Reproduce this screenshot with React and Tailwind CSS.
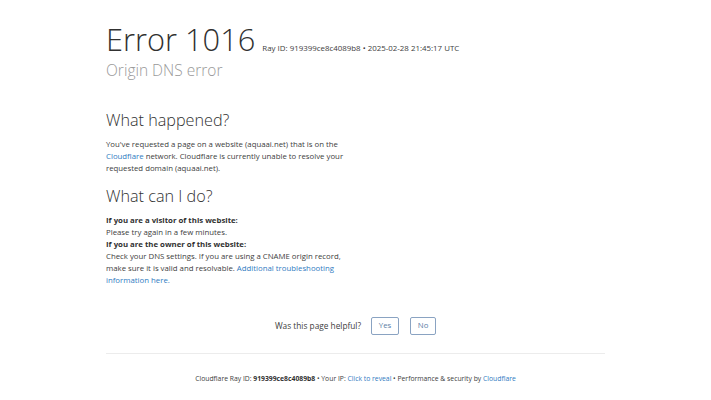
export default function App() {
  const font = { fontFamily: '"Open Sans", "Noto Sans", sans-serif' };
  return (
    <div className="min-h-[400px] bg-white text-[#404040]" style={font}>
      <div className="mx-auto w-[499px] pt-[20px]">
        <h1 className="flex items-baseline text-[#313131]">
          <span className="text-[30.8px] font-light leading-[39px]">Error 1016</span>
          <span className="ml-[7px] text-[7.9px] leading-[12px] text-[#404040]">
            Ray ID: 919399ce8c4089b8 • 2025-02-28 21:45:17 UTC
          </span>
        </h1>
        <h2 className="mt-[1px] text-[15.5px] font-light leading-[20px] text-[#999999]">Origin DNS error</h2>

        <div className="mt-[30px] w-[244px]">
          <h2 className="text-[16.2px] font-light leading-[20px] text-[#313131]">What happened?</h2>
          <p className="mt-[8px] text-[7.8px] leading-[12px]">
            You've requested a page on a website (aquaai.net) that is on the{" "}
            <span className="text-[#2f7bbf]">Cloudflare</span> network. Cloudflare is currently unable to resolve your
            requested domain (aquaai.net).
          </p>

          <h2 className="mt-[12px] text-[16.2px] font-light leading-[20px] text-[#313131]">What can I do?</h2>
          <div className="mt-[8px] text-[7.8px] leading-[12px]">
            <p className="font-bold text-[#313131]">If you are a visitor of this website:</p>
            <p>Please try again in a few minutes.</p>
            <p className="font-bold text-[#313131]">If you are the owner of this website:</p>
            <p>
              Check your DNS settings. If you are using a CNAME origin record, make sure it is valid and resolvable.{" "}
              <span className="text-[#2f7bbf]">Additional troubleshooting information here.</span>
            </p>
          </div>
        </div>

        <div className="mt-[31px] flex items-center justify-center text-[8.3px]">
          <span>Was this page helpful?</span>
          <button className="ml-[10px] flex h-[18px] w-[28px] items-center justify-center rounded-[2px] border border-[#8aa3c2] bg-white text-[7.8px] text-[#5a7ea6]">
            Yes
          </button>
          <button className="ml-[11px] flex h-[18px] w-[26px] items-center justify-center rounded-[2px] border border-[#8aa3c2] bg-white text-[7.8px] text-[#5a7ea6]">
            No
          </button>
        </div>

        <div className="mt-[18px] border-t border-[#ececec]"></div>

        <p className="mt-[19px] text-center text-[6.8px] leading-[12px]">
          Cloudflare Ray ID: <span className="font-bold text-[#313131]">919399ce8c4089b8</span> • Your IP:{" "}
          <span className="text-[#2f7bbf]">Click to reveal</span> • Performance &amp; security by{" "}
          <span className="text-[#2f7bbf]">Cloudflare</span>
        </p>
      </div>
    </div>
  );
}
